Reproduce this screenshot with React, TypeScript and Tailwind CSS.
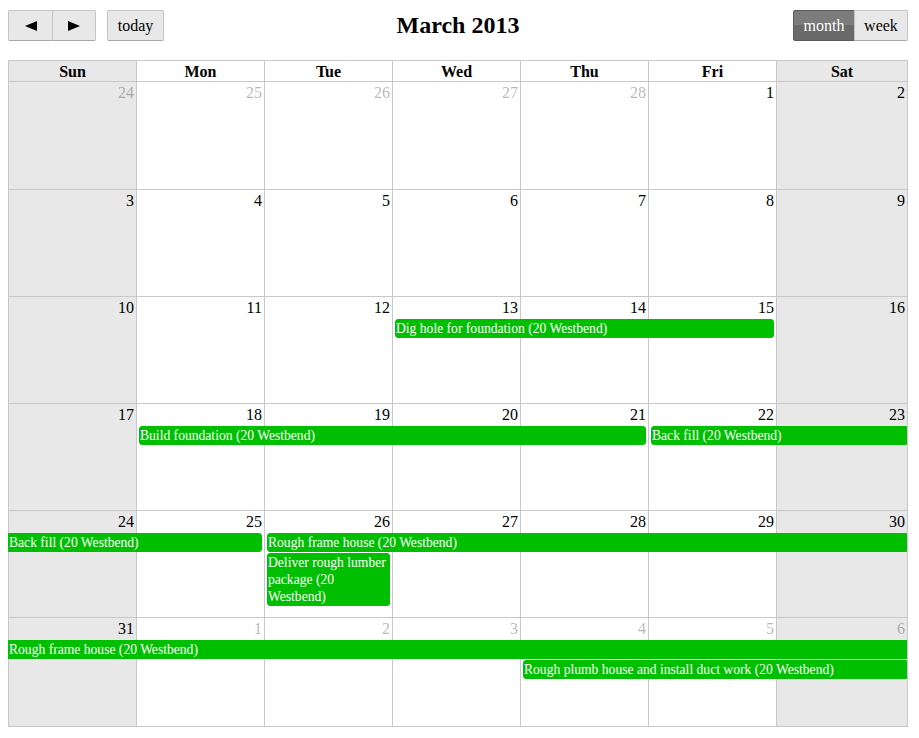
import React from "react";

type Ev = { title: string; from: number; to: number; row: number; start: boolean; end: boolean };
type Week = { days: { n: number; other?: boolean }[]; events: Ev[]; h: string };

const colStart = ["col-start-1", "col-start-2", "col-start-3", "col-start-4", "col-start-5", "col-start-6", "col-start-7"];
const colEnd = ["col-end-2", "col-end-3", "col-end-4", "col-end-5", "col-end-6", "col-end-7", "col-end-8"];
const rowStart = ["row-start-2", "row-start-3"];

const range = (a: number, b: number, other = false) =>
  Array.from({ length: b - a + 1 }, (_, i) => ({ n: a + i, other }));

const weeks: Week[] = [
  { days: [...range(24, 28, true), ...range(1, 2)], events: [], h: "h-[108px]" },
  { days: range(3, 9), events: [], h: "h-[107px]" },
  {
    days: range(10, 16),
    h: "h-[107px]",
    events: [{ title: "Dig hole for foundation (20 Westbend)", from: 3, to: 5, row: 0, start: true, end: true }],
  },
  {
    days: range(17, 23),
    h: "h-[107px]",
    events: [
      { title: "Build foundation (20 Westbend)", from: 1, to: 4, row: 0, start: true, end: true },
      { title: "Back fill (20 Westbend)", from: 5, to: 6, row: 0, start: true, end: false },
    ],
  },
  {
    days: range(24, 30),
    h: "h-[107px]",
    events: [
      { title: "Back fill (20 Westbend)", from: 0, to: 1, row: 0, start: false, end: true },
      { title: "Rough frame house (20 Westbend)", from: 2, to: 6, row: 0, start: true, end: false },
      { title: "Deliver rough lumber package (20 Westbend)", from: 2, to: 2, row: 1, start: true, end: true },
    ],
  },
  {
    days: [{ n: 31 }, ...range(1, 6, true)],
    h: "h-[109px]",
    events: [
      { title: "Rough frame house (20 Westbend)", from: 0, to: 6, row: 0, start: false, end: false },
      { title: "Rough plumb house and install duct work (20 Westbend)", from: 4, to: 6, row: 1, start: true, end: false },
    ],
  },
];

const dayNames = ["Sun", "Mon", "Tue", "Wed", "Thu", "Fri", "Sat"];
const cols = "grid grid-cols-[128px_128px_128px_128px_128px_128px_1fr]";
const btn =
  "h-[31px] border border-[#c4c4c4] border-b-[#a8a8a8] bg-[#e8e8e8] text-black text-base leading-none flex items-center justify-center";

function Arrow({ dir }: { dir: "l" | "r" }) {
  return (
    <svg width="12" height="10" viewBox="0 0 12 10" className="block">
      <path d={dir === "l" ? "M0 5 L12 0 L12 10 Z" : "M12 5 L0 0 L0 10 Z"} fill="#000" />
    </svg>
  );
}

function EventBar({ e }: { e: Ev }) {
  return (
    <div
      className={[
        colStart[e.from],
        colEnd[e.to],
        rowStart[e.row],
        "self-start mb-[1px] border border-[#00bf00] bg-[#00bf00] text-white text-[13.6px] leading-[17px] overflow-hidden",
        e.start ? "ml-[3px] rounded-l-[3px]" : "",
        e.end ? "mr-[2px] rounded-r-[3px]" : "",
      ].join(" ")}
    >
      {e.title}
    </div>
  );
}

export default function App() {
  return (
    <div className="w-[919px] h-[738px] bg-white font-['Liberation_Serif','Times_New_Roman',serif] text-black">
      <div className="flex items-start px-2 pt-[10px] mb-[19px]">
        <div className="flex-1 flex gap-[11px]">
          <div className="flex">
            <button className={`${btn} w-[45px] rounded-l-[2px]`}>
              <Arrow dir="l" />
            </button>
            <button className={`${btn} w-[44px] -ml-px rounded-r-[2px]`}>
              <Arrow dir="r" />
            </button>
          </div>
          <button className={`${btn} w-[57px] rounded-[2px]`}>today</button>
        </div>
        <h2 className="text-[24px] font-bold leading-[31px]">March 2013</h2>
        <div className="flex-1 flex justify-end mr-[3px]">
          <button className="h-[31px] w-[62px] rounded-l-[2px] border border-[#5a5a5a] bg-[linear-gradient(#7c7c7c_0%,#7c7c7c_50%,#6a6a6a_50%,#6a6a6a_100%)] text-white text-base flex items-center justify-center">
            month
          </button>
          <button className={`${btn} w-[54px] -ml-px rounded-r-[2px]`}>week</button>
        </div>
      </div>

      <div className="ml-2 w-[900px] border-b border-r border-[#c8c8c8]">
        <div className={`${cols} border-t border-[#c8c8c8]`}>
          {dayNames.map((d, i) => (
            <div
              key={d}
              className={`h-[20px] border-l border-[#c8c8c8] text-center font-bold text-base leading-[22px] ${
                i === 0 || i === 6 ? "bg-[#e8e8e8]" : "bg-white"
              }`}
            >
              {d}
            </div>
          ))}
        </div>
        {weeks.map((w, wi) => (
          <div key={wi} className={`${cols} grid-rows-[22px_auto_auto_1fr] border-t border-[#c8c8c8] ${w.h}`}>
            {w.days.map((d, i) => (
              <div
                key={i}
                className={`${colStart[i]} row-span-full border-l border-[#c8c8c8] text-right pr-[2px] pt-[1px] text-base leading-[20px] ${
                  i === 0 || i === 6 ? "bg-[#e8e8e8]" : "bg-white"
                } ${d.other ? "text-black/30" : "text-black"}`}
              >
                {d.n}
              </div>
            ))}
            {w.events.map((e, ei) => (
              <EventBar key={ei} e={e} />
            ))}
          </div>
        ))}
      </div>
    </div>
  );
}
